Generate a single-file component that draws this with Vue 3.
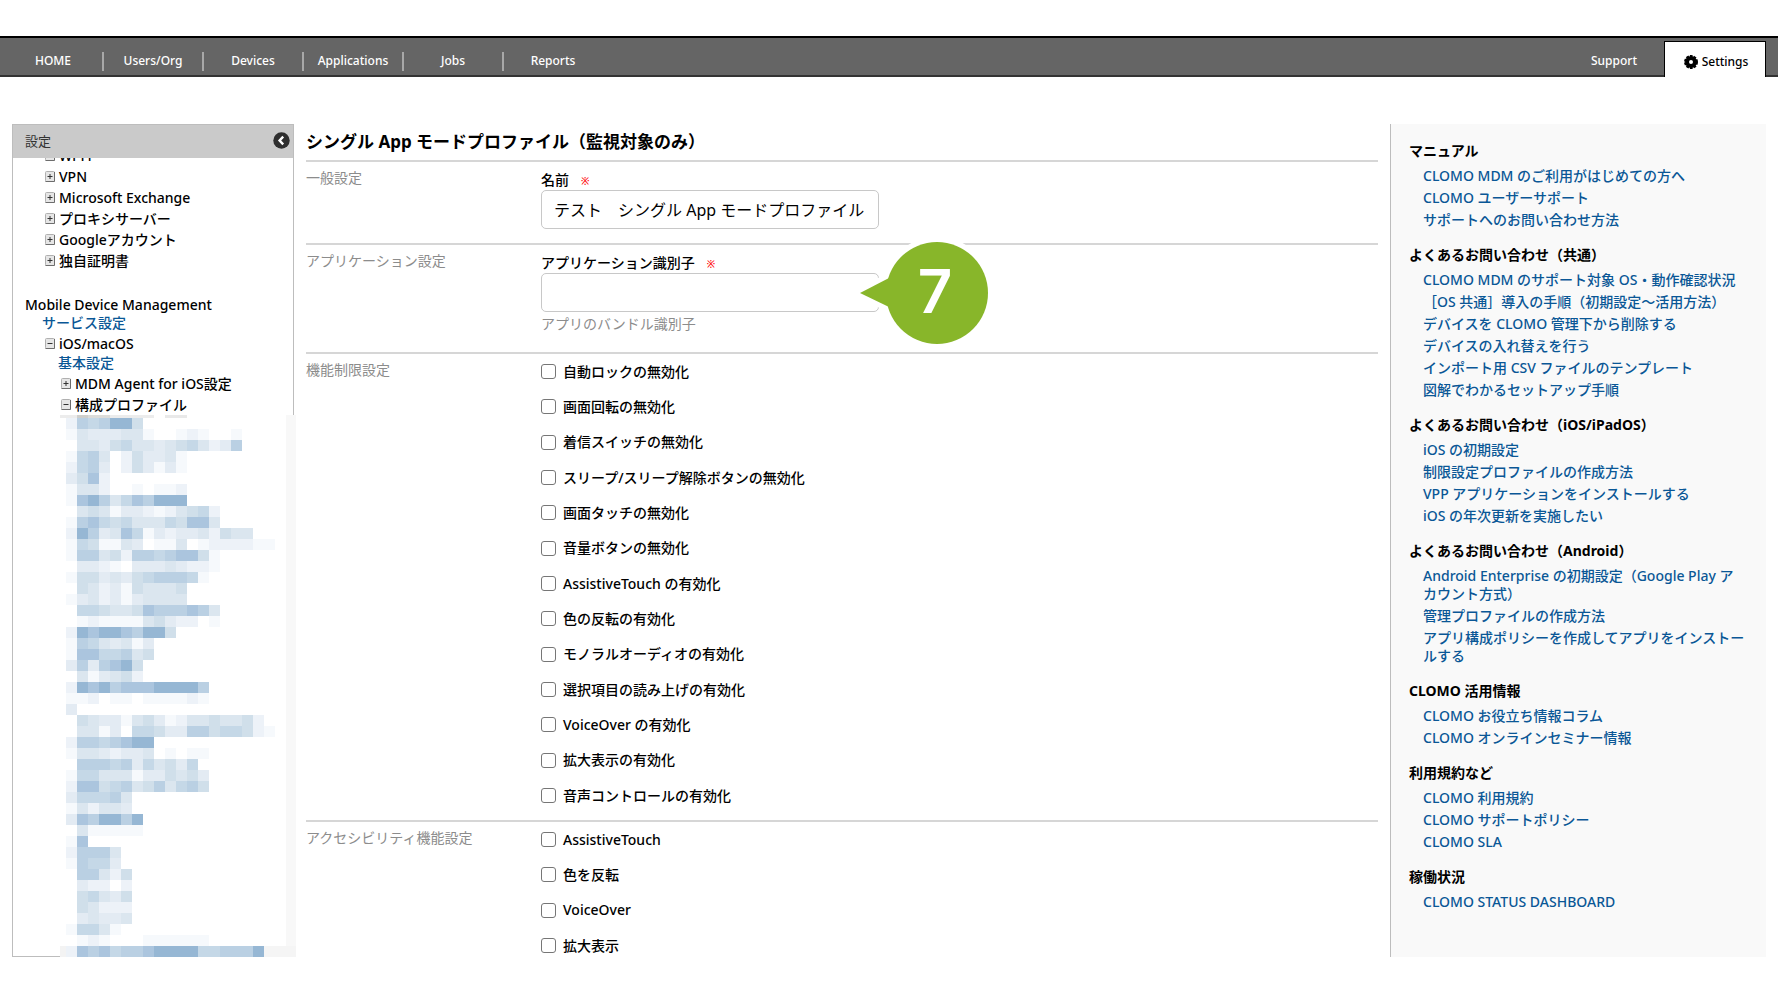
<script setup>
import { ref } from 'vue'

const navItems = ['HOME', 'Users/Org', 'Devices', 'Applications', 'Jobs', 'Reports']

const tree = [
  { text: 'Wi-Fi', kind: 'closed', level: 1 },
  { text: 'VPN', kind: 'closed', level: 1 },
  { text: 'Microsoft Exchange', kind: 'closed', level: 1 },
  { text: 'プロキシサーバー', kind: 'closed', level: 1 },
  { text: 'Googleアカウント', kind: 'closed', level: 1 },
  { text: '独自証明書', kind: 'closed', level: 1 },
  { text: 'Mobile Device Management', kind: 'heading', level: 0 },
  { text: 'サービス設定', kind: 'link', level: 1 },
  { text: 'iOS/macOS', kind: 'open', level: 1 },
  { text: '基本設定', kind: 'link', level: 2 },
  { text: 'MDM Agent for iOS設定', kind: 'closed', level: 2 },
  { text: '構成プロファイル', kind: 'open', level: 2 }
]

const name = ref('テスト　シングル App モードプロファイル')
const bundleId = ref('')

const restrictions = [
  '自動ロックの無効化',
  '画面回転の無効化',
  '着信スイッチの無効化',
  'スリープ/スリープ解除ボタンの無効化',
  '画面タッチの無効化',
  '音量ボタンの無効化',
  'AssistiveTouch の有効化',
  '色の反転の有効化',
  'モノラルオーディオの有効化',
  '選択項目の読み上げの有効化',
  'VoiceOver の有効化',
  '拡大表示の有効化',
  '音声コントロールの有効化'
]
const accessibility = ['AssistiveTouch', '色を反転', 'VoiceOver', '拡大表示']

const helpGroups = [
  {
    title: 'マニュアル',
    links: ['CLOMO MDM のご利用がはじめての方へ', 'CLOMO ユーザーサポート', 'サポートへのお問い合わせ方法']
  },
  {
    title: 'よくあるお問い合わせ（共通）',
    links: [
      'CLOMO MDM のサポート対象 OS・動作確認状況',
      '［OS 共通］導入の手順（初期設定～活用方法）',
      'デバイスを CLOMO 管理下から削除する',
      'デバイスの入れ替えを行う',
      'インポート用 CSV ファイルのテンプレート',
      '図解でわかるセットアップ手順'
    ]
  },
  {
    title: 'よくあるお問い合わせ（iOS/iPadOS）',
    links: [
      'iOS の初期設定',
      '制限設定プロファイルの作成方法',
      'VPP アプリケーションをインストールする',
      'iOS の年次更新を実施したい'
    ]
  },
  {
    title: 'よくあるお問い合わせ（Android）',
    links: [
      'Android Enterprise の初期設定（Google Play アカウント方式）',
      '管理プロファイルの作成方法',
      'アプリ構成ポリシーを作成してアプリをインストールする'
    ]
  },
  { title: 'CLOMO 活用情報', links: ['CLOMO お役立ち情報コラム', 'CLOMO オンラインセミナー情報'] },
  { title: '利用規約など', links: ['CLOMO 利用規約', 'CLOMO サポートポリシー', 'CLOMO SLA'] },
  { title: '稼働状況', links: ['CLOMO STATUS DASHBOARD'] }
]

// Mosaic over the private profile names: one digit per tile, 0 = white, 9 = darkest.
const shades = ['#ffffff', '#f6f9fc', '#edf2f8', '#e3ebf3', '#dbe6ef', '#d0dfea', '#c5d8e7', '#bad0e3', '#abc5de', '#96b7d4']
const mosaic = [
  '2767995', '1433344100121001', '0443564434564237', '16740253341', '26730253131', '3582',
  '14420010112', '18974687999', '04541332124562', '17865644465884', '297348613233425440',
  '1651143011401222211', '17745277678851', '03321033343221', '1553435677761', '05423154445',
  '13423134444', '06654458777874', '01211114532201', '2989987995', '17643413', '18866745',
  '3737895', '0413452', '2989788899997', '1120110111121', '3', '054331453124454452',
  '0441306653377566521', '27767899', '1443233401011', '077767364536', '1664441335453',
  '2885674574675', '366674', '142443', '3879979', '0411111', '18', '27774', '17663', '077425',
  '032202', '056435', '054222', '034334', '16641', '0121000111111', '287867789999667779'
]
const tiles = mosaic.flatMap((row, y) =>
  [...row].map((d, x) => ({ x: 6 + x * 11, y: 3 + y * 11, fill: shades[d] }))
)
</script>

<template>
  <div class="page">
    <nav class="topbar">
      <a v-for="item in navItems" :key="item" href="#" class="nav-item">{{ item }}</a>
      <span class="spacer"></span>
      <a href="#" class="nav-support">Support</a>
      <a href="#" class="nav-settings">
        <svg width="14" height="14" viewBox="0 0 14 14" aria-hidden="true">
          <circle cx="7" cy="7" r="4" fill="none" stroke="#000" stroke-width="4" />
          <circle cx="7" cy="7" r="6" fill="none" stroke="#000" stroke-width="2" stroke-dasharray="2.7 1.08" />
        </svg>
        Settings
      </a>
    </nav>

    <div class="columns">
      <aside class="sidebar">
        <header class="sidebar-head">
          <span>設定</span>
          <button type="button" aria-label="サイドバーを閉じる">
            <svg width="17" height="17" viewBox="0 0 17 17">
              <circle cx="8.5" cy="8.5" r="8.2" fill="#2e2e2e" />
              <path d="M10.2 4.7 6.6 8.5l3.6 3.8" fill="none" stroke="#fff" stroke-width="2.4" />
            </svg>
          </button>
        </header>
        <div class="tree-view">
          <ul class="tree">
            <li v-for="n in tree" :key="n.text" :class="[n.kind, 'level-' + n.level]">
              <svg v-if="n.kind === 'open' || n.kind === 'closed'" width="10" height="11" viewBox="0 0 10 11" aria-hidden="true">
                <rect x=".5" y=".5" width="9" height="10" rx="1" fill="#e6e6e6" stroke="#b0b0b0" />
                <path d="M9.5 1v9.5H.5" fill="none" stroke="#6d6d6d" />
                <path d="M2.5 5.5h5" stroke="#333" />
                <path v-if="n.kind === 'closed'" d="M5 3v5" stroke="#333" />
              </svg>
              <a v-if="n.kind === 'link'" href="#">{{ n.text }}</a>
              <span v-else>{{ n.text }}</span>
            </li>
          </ul>
        </div>
        <svg class="mosaic" width="236" height="542" viewBox="0 0 236 542" shape-rendering="crispEdges" aria-hidden="true">
          <rect width="236" height="542" fill="#fff" />
          <rect x="226" width="10" height="542" fill="#f8f8f8" />
          <rect width="94" height="3" fill="#ececec" />
          <rect x="17" width="11" height="3" fill="#cfcfcc" />
          <rect x="28" width="22" height="3" fill="#dcdcda" />
          <rect x="105" width="22" height="3" fill="#e9e9e9" />
          <rect y="531" width="17" height="11" fill="#f3f3f3" />
          <rect x="204" y="531" width="32" height="11" fill="#f5f5f5" />
          <rect v-for="(t, i) in tiles" :key="i" :x="t.x" :y="t.y" width="11" height="11" :fill="t.fill" />
        </svg>
      </aside>

      <main class="content">
        <h1>シングル App モードプロファイル（監視対象のみ）</h1>

        <section class="block">
          <h2>一般設定</h2>
          <div class="field">
            <label for="profile-name">名前<em>※</em></label>
            <input id="profile-name" v-model="name" type="text" />
          </div>
        </section>

        <section class="block">
          <h2>アプリケーション設定</h2>
          <div class="field">
            <label for="bundle-id">アプリケーション識別子<em>※</em></label>
            <div class="with-badge">
              <input id="bundle-id" v-model="bundleId" type="text" />
              <svg class="badge" width="140" height="114" viewBox="0 0 140 114">
                <g stroke="#fff" stroke-width="10" stroke-linejoin="round">
                  <circle cx="82" cy="57" r="51" />
                  <path d="M5 57 34 42v29z" />
                </g>
                <g fill="#88b62a">
                  <circle cx="82" cy="57" r="51" />
                  <path d="M5 57 34 42v29z" />
                </g>
                <text x="80" y="77" text-anchor="middle">7</text>
              </svg>
            </div>
            <p class="hint">アプリのバンドル識別子</p>
          </div>
        </section>

        <section class="block checks">
          <h2>機能制限設定</h2>
          <ul>
            <li v-for="r in restrictions" :key="r">
              <label><input type="checkbox" />{{ r }}</label>
            </li>
          </ul>
        </section>

        <section class="block checks">
          <h2>アクセシビリティ機能設定</h2>
          <ul>
            <li v-for="a in accessibility" :key="a">
              <label><input type="checkbox" />{{ a }}</label>
            </li>
          </ul>
        </section>
      </main>

      <aside class="help">
        <section v-for="g in helpGroups" :key="g.title">
          <h3>{{ g.title }}</h3>
          <ul>
            <li v-for="l in g.links" :key="l"><a href="#">{{ l }}</a></li>
          </ul>
        </section>
      </aside>
    </div>
  </div>
</template>

<style>
body {
  margin: 0;
  background: #fff;
}
</style>

<style scoped>
.page {
  padding-top: 36px;
  font-family: "Noto Sans", "Noto Sans CJK JP", sans-serif;
  font-size: 14px;
  font-weight: 500;
  line-height: 18px;
  color: #000;
}
.page * {
  box-sizing: border-box;
}
ul {
  list-style: none;
  margin: 0;
  padding: 0;
}
h1, h2, h3, p {
  margin: 0;
}
a {
  color: #0a5796;
  text-decoration: none;
}

.topbar {
  display: flex;
  height: 41px;
  padding: 0 12px 0 4px;
  border-top: 2px solid #000;
  box-shadow: inset 0 -2px #333;
  background: #656565;
  font-size: 12px;
}
.topbar a {
  display: flex;
  align-items: center;
  justify-content: center;
  width: 100px;
  padding: 6px 2px 0 0;
  color: #fff;
}
.nav-item {
  position: relative;
}
.nav-item:not(:nth-child(6))::after {
  content: "";
  position: absolute;
  right: 0;
  top: 14px;
  width: 2px;
  height: 19px;
  background: #a8a8a8;
}
.topbar .nav-support {
  padding-right: 0;
}
.spacer {
  flex: 1;
}
.topbar .nav-settings {
  gap: 4px;
  width: 102px;
  margin-top: 3px;
  padding: 4px 0 0 2px;
  border: 1px solid #000;
  border-bottom: 0;
  background: #fff;
  color: #000;
}

.columns {
  display: grid;
  grid-template-columns: 282px minmax(0, 1fr) 376px;
  padding: 47px 12px 43px;
}

.sidebar {
  position: relative;
  border: 1px solid #bdbdbd;
}
.sidebar-head {
  display: flex;
  align-items: center;
  justify-content: space-between;
  height: 33px;
  padding: 0 3px 2px 12px;
  background: #cacaca;
  font-size: 13px;
  font-weight: 400;
  color: #333;
}
.sidebar-head button {
  display: flex;
  padding: 0;
  border: 0;
  background: none;
}
.tree-view {
  overflow: hidden;
}
.tree {
  margin-top: -13px;
}
.tree li {
  display: flex;
  align-items: center;
  gap: 4px;
  height: 21px;
}
.tree .level-1 {
  padding-left: 32px;
}
.tree .level-2 {
  padding-left: 48px;
}
.tree .heading {
  height: 19px;
  margin-top: 24px;
  padding-left: 12px;
}
.tree .link {
  height: 19px;
  padding-bottom: 2px;
}
.tree .link.level-1 {
  padding-left: 29px;
}
.tree .link.level-2 {
  padding-left: 45px;
}
.mosaic {
  position: absolute;
  top: 290px;
  left: 47px;
}

.content {
  padding: 0 12px;
}
h1 {
  padding: 9px 0;
  font-size: 17px;
  font-weight: 700;
}
.block {
  display: grid;
  grid-template-columns: 235px minmax(0, 1fr);
  border-top: 2px solid #d6d6d6;
}
h2 {
  padding-top: 7px;
  font-size: 14px;
  font-weight: 400;
  color: #8c8c8c;
}
.field {
  padding: 10px 0 14px;
}
.field label {
  display: block;
  margin-bottom: 2px;
  line-height: 16px;
}
.field em {
  margin-left: 12px;
  font-size: 10px;
  font-style: normal;
  line-height: 0;
  color: #f00;
}
.field input {
  display: block;
  width: 338px;
  height: 39px;
  padding: 0 12px 2px;
  border: 1px solid #c8c8c8;
  border-radius: 5px;
  background: #fff;
  font-family: inherit;
  font-size: 16px;
  color: #000;
}
.with-badge {
  position: relative;
}
.badge {
  position: absolute;
  top: -37px;
  left: 314px;
}
.badge text {
  fill: #fff;
  font-family: Inter, sans-serif;
  font-size: 60px;
  font-weight: 600;
}
.hint {
  padding: 3px 0 5px;
  font-weight: 400;
  color: #8c8c8c;
}
.checks li {
  display: flex;
  align-items: center;
  height: 35px;
}
.checks li:nth-child(3n) {
  height: 36px;
}
.checks ul {
  padding-bottom: 7px;
}
.checks:last-child ul {
  padding-bottom: 0;
  margin-bottom: -6px;
}
.checks label {
  display: flex;
  align-items: center;
}
.checks input {
  appearance: none;
  width: 15px;
  height: 15px;
  margin: 0 7px 0 0;
  border: 1px solid #767676;
  border-radius: 3px;
  background: #fff;
}

.help {
  padding: 18px 20px 17px 18px;
  border-left: 1px solid #bdbdbd;
  background: #f9f9f9;
}
.help section {
  margin-bottom: 17px;
}
.help h3 {
  margin-bottom: 7px;
  font-size: 14px;
  font-weight: 700;
}
.help li {
  margin-bottom: 4px;
  padding-left: 14px;
}
</style>
